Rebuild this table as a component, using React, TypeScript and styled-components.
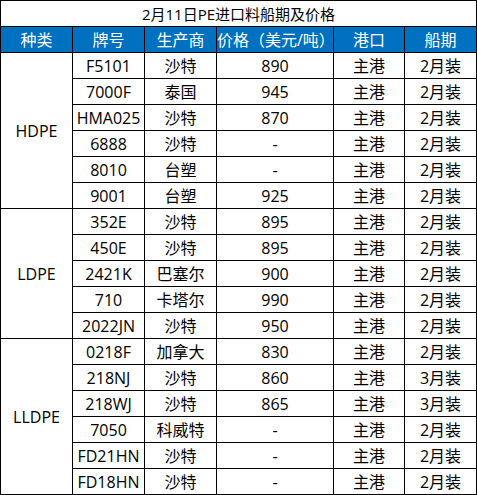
import React from "react";
import styled, { createGlobalStyle } from "styled-components";

const Global = createGlobalStyle`
  html, body { margin: 0; padding: 0; background: #fff; }
  body { font-family: "Open Sans", "Noto Sans CJK SC", sans-serif; }
`;

const Table = styled.table`
  border-collapse: collapse;
  table-layout: fixed;
  width: 477px;
  font-size: 16px;
  line-height: 20px;
  color: #000;
`;

const Col = styled.col<{ $w: number }>`
  width: ${(p) => p.$w}px;
`;

const Row = styled.tr`
  height: 26px;
`;

const TitleCell = styled.td`
  border: 1px solid #000;
  text-align: center;
  padding: 0;
  height: 25px;
  font-size: 15px;
  background: #fff;
`;

const HeadCell = styled.th`
  background: #0070c0;
  color: #fff;
  font-weight: normal;
  border: 1px solid #000;
  padding: 0;
  height: 25px;
  text-align: center;
  white-space: nowrap;
  overflow: hidden;
`;

const Cell = styled.td`
  border: 1px solid #000;
  padding: 0;
  height: 25px;
  text-align: center;
  white-space: nowrap;
  overflow: hidden;
`;

type Item = [string, string, string, string];

const groups: { name: string; rows: Item[] }[] = [
  {
    name: "HDPE",
    rows: [
      ["F5101", "沙特", "890", "2月装"],
      ["7000F", "泰国", "945", "2月装"],
      ["HMA025", "沙特", "870", "2月装"],
      ["6888", "沙特", "-", "2月装"],
      ["8010", "台塑", "-", "2月装"],
      ["9001", "台塑", "925", "2月装"],
    ],
  },
  {
    name: "LDPE",
    rows: [
      ["352E", "沙特", "895", "2月装"],
      ["450E", "沙特", "895", "2月装"],
      ["2421K", "巴塞尔", "900", "2月装"],
      ["710", "卡塔尔", "990", "2月装"],
      ["2022JN", "沙特", "950", "2月装"],
    ],
  },
  {
    name: "LLDPE",
    rows: [
      ["0218F", "加拿大", "830", "2月装"],
      ["218NJ", "沙特", "860", "3月装"],
      ["218WJ", "沙特", "865", "3月装"],
      ["7050", "科威特", "-", "2月装"],
      ["FD21HN", "沙特", "-", "2月装"],
      ["FD18HN", "沙特", "-", "2月装"],
    ],
  },
];

const widths = [72, 72, 72, 117, 71, 72];
const heads = ["种类", "牌号", "生产商", "价格（美元/吨）", "港口", "船期"];

export default function App() {
  return (
    <>
      <Global />
      <Table>
        <colgroup>
          {widths.map((w, i) => (
            <Col key={i} $w={w} />
          ))}
        </colgroup>
        <thead>
          <Row>
            <TitleCell colSpan={6}>2月11日PE进口料船期及价格</TitleCell>
          </Row>
          <Row>
            {heads.map((h) => (
              <HeadCell key={h}>{h}</HeadCell>
            ))}
          </Row>
        </thead>
        <tbody>
          {groups.map((g) =>
            g.rows.map((r, i) => (
              <Row key={g.name + r[0]}>
                {i === 0 && <Cell rowSpan={g.rows.length}>{g.name}</Cell>}
                <Cell>{r[0]}</Cell>
                <Cell>{r[1]}</Cell>
                <Cell>{r[2]}</Cell>
                <Cell>主港</Cell>
                <Cell>{r[3]}</Cell>
              </Row>
            ))
          )}
        </tbody>
      </Table>
    </>
  );
}
